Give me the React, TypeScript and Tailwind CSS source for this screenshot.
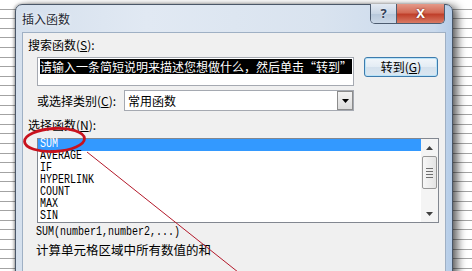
const cjk = "font-['Noto_Sans_CJK_SC','Noto_Sans',sans-serif]";
const mono = "font-['Liberation_Mono','DejaVu_Sans_Mono',monospace]";

const functions = ["SUM", "AVERAGE", "IF", "HYPERLINK", "COUNT", "MAX", "SIN"];

function CaptionButtons() {
  return (
    <div className="ml-auto mr-[7px] -mt-px flex h-[20px] overflow-hidden rounded-b-[5px] border border-t-0 border-[#4d5c70]">
      <div className="flex w-[26px] items-center justify-center border-r border-[#4d5c70] bg-[linear-gradient(to_bottom,#e3eaf3,#c9d6e5_50%,#b6c7da_51%,#cbd8e7)] text-[13px] font-bold leading-none text-[#34425a] [text-shadow:0_0_2px_#fff]">
        ?
      </div>
      <div className="flex w-[47px] items-center justify-center bg-[linear-gradient(to_bottom,#e49a8a,#d36a55_45%,#c0402b_55%,#d97a64)] text-[13px] font-bold leading-none text-white [text-shadow:0_0_2px_#5a1208]">
        X
      </div>
    </div>
  );
}

function ScrollBar() {
  return (
    <div className="flex w-[17px] flex-col items-center bg-[#f4f4f4]">
      <div className="flex h-[17px] w-full items-center justify-center">
        <svg width="7" height="4" viewBox="0 0 7 4">
          <path d="M0 4 L3.5 0 L7 4 Z" fill="#404040" />
        </svg>
      </div>
      <div className="flex h-[33px] w-[15px] flex-col items-center justify-center gap-[2px] rounded-[2px] border border-[#979797] bg-[linear-gradient(to_right,#f7f7f7,#e4e4e4)]">
        <div className="h-px w-[7px] bg-[#6f6f6f]" />
        <div className="h-px w-[7px] bg-[#6f6f6f]" />
        <div className="h-px w-[7px] bg-[#6f6f6f]" />
        <div className="h-px w-[7px] bg-[#6f6f6f]" />
      </div>
      <div className="flex-1" />
      <div className="flex h-[17px] w-full items-center justify-center">
        <svg width="7" height="4" viewBox="0 0 7 4">
          <path d="M0 0 L7 0 L3.5 4 Z" fill="#404040" />
        </svg>
      </div>
    </div>
  );
}

function FunctionList() {
  return (
    <div className="ml-[14px] mt-[6px] flex h-[85px] w-[402px] border border-[#828790] bg-white">
      <div className={`w-[383px] ${mono} text-[10px] leading-[12px] text-black`}>
        {functions.map((name, i) => (
          <div
            key={name}
            className={`h-[12px] pl-[2px] ${i === 0 ? "bg-[#3399ff] text-white" : ""}`}
          >
            <span className="inline-block origin-center scale-y-[1.2]">{name}</span>
          </div>
        ))}
      </div>
      <ScrollBar />
    </div>
  );
}

export default function App() {
  return (
    <div className="relative h-[271px] w-[472px] overflow-hidden bg-white bg-[image:repeating-linear-gradient(to_bottom,transparent_0px,transparent_8.6px,#a3a3a3_8.6px,#a3a3a3_9.6px)]">
      {/* dialog window */}
      <div className="absolute left-[15px] top-[4px] flex h-[300px] w-[438px] flex-col rounded-t-[7px] border border-[#4a5768] bg-[linear-gradient(to_right,#d5e0ed,#e1e9f3_30%,#d9e3ef_70%,#c9d9ec_96%,#b4cce8)] shadow-[5px_2px_9px_rgba(0,0,0,0.6),-1px_0_3px_rgba(0,0,0,0.35)]">
        {/* title bar */}
        <div className="flex h-[27px] items-start">
          <div className={`pl-[6px] pt-[7px] ${cjk} text-[12px] leading-[14px] text-[#1f2833] [text-shadow:0_0_4px_#fff]`}>
            插入函数
          </div>
          <CaptionButtons />
        </div>

        {/* client area */}
        <div className={`mx-[6px] flex flex-1 flex-col border border-[#9fb0c4] bg-[#f0f0f0] ${cjk} text-[12px] text-black`}>
          <div className="pl-[5px] pt-[5px] leading-[14px]">
            搜索函数(<span className="underline">S</span>):
          </div>

          <div className="mt-[5px] flex items-start">
            <div className="ml-[14px] h-[29px] w-[317px] border border-[#a5a9b1] bg-white pl-[2px] pt-px">
              <div className="h-[15px] w-fit whitespace-nowrap bg-black leading-[15px] text-white">
                请输入一条简短说明来描述您想做什么，然后单击“转到”
              </div>
            </div>
            <div className="ml-[10px] flex h-[20px] w-[74px] items-center justify-center rounded-[3px] border border-[#3d7bad] bg-[linear-gradient(to_bottom,#f2f6fa,#e3ecf4_50%,#d4e1ed_51%,#dbe7f1)] leading-none shadow-[inset_0_0_0_1px_#b9e3f8]">
              转到(<span className="underline">G</span>)
            </div>
          </div>

          <div className="mt-[4px] flex items-center">
            <div className="ml-[14px] w-[87px] leading-[14px]">
              或选择类别(<span className="underline">C</span>):
            </div>
            <div className="flex h-[21px] w-[230px] items-center border border-[#a5a9b1] bg-white">
              <div className="flex-1 pl-[3px] leading-[14px]">常用函数</div>
              <div className="flex h-[19px] w-[16px] items-center justify-center border border-[#8c8c8c] bg-[linear-gradient(to_bottom,#f3f3f3,#dcdcdc)]">
                <svg width="7" height="4" viewBox="0 0 7 4">
                  <path d="M0 0 L7 0 L3.5 4 Z" fill="#000" />
                </svg>
              </div>
            </div>
          </div>

          <div className="mt-[7px] pl-[5px] leading-[14px]">
            选择函数(<span className="underline">N</span>):
          </div>

          <FunctionList />

          <div className={`ml-[13px] mt-[4px] ${mono} text-[10px] leading-[12px]`}>
            <span className="inline-block origin-center scale-y-[1.2]">SUM(number1,number2,...)</span>
          </div>
          <div className="ml-[13px] mt-[4px] text-[12.5px] leading-[14px]">计算单元格区域中所有数值的和</div>
        </div>
      </div>

      {/* red annotation */}
      <svg
        className="pointer-events-none absolute inset-0"
        width="472"
        height="271"
        viewBox="0 0 472 271"
      >
        <ellipse
          cx="54.5"
          cy="140"
          rx="30"
          ry="11.5"
          fill="none"
          stroke="#c8121e"
          strokeWidth="2.8"
          transform="rotate(-3 54.5 140)"
        />
        <line x1="87" y1="152" x2="243" y2="276" stroke="#b3192a" strokeWidth="1" />
      </svg>
    </div>
  );
}
